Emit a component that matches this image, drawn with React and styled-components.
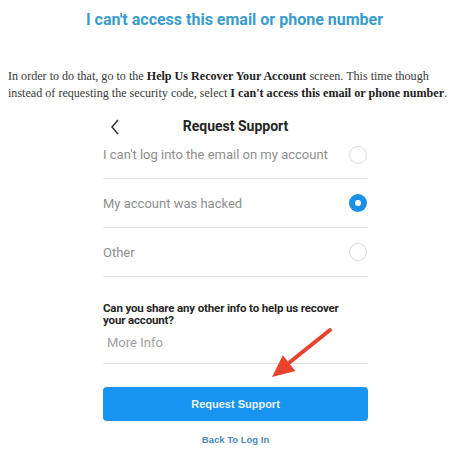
import styled, { createGlobalStyle } from 'styled-components';

const GlobalStyle = createGlobalStyle`
    body {
        margin: 0;
        background: #fff;
    }
`;

const Page = styled.div`
    width: 463px;
    height: 463px;
    overflow: hidden;
    background: #fff;
`;

const Heading = styled.h2`
    margin: 0;
    padding: 10px 0 0 6px;
    text-align: center;
    font-family: Roboto, "Liberation Sans", sans-serif;
    font-weight: 700;
    font-size: 16px;
    line-height: 20px;
    color: #3a9ccb;
`;

const Intro = styled.p`
    margin: 38px 0 0 8px;
    font-family: "Liberation Serif", serif;
    font-size: 12.1px;
    line-height: 17px;
    color: #3a3a3a;
    white-space: nowrap;

    b {
        font-weight: 700;
        color: #222;
    }
`;

const Phone = styled.div`
    position: relative;
    width: 265px;
    margin: 10px 0 0 103px;
    font-family: Roboto, "Liberation Sans", Arial, sans-serif;
`;

const TopBar = styled.div`
    display: flex;
    align-items: center;
    justify-content: center;
    position: relative;
    height: 28px;
`;

const Back = styled.span`
    position: absolute;
    left: 7px;
    top: 7px;
    display: flex;
`;

const Title = styled.div`
    font-weight: 700;
    font-size: 14px;
    color: #262626;
`;

const Option = styled.div`
    display: flex;
    align-items: center;
    justify-content: space-between;
    height: ${p => p.$first ? 29 : 48}px;
    padding-bottom: ${p => p.$first ? 9 : 0}px;
    border-bottom: 1px solid #e4e4e4;
    font-size: 13px;
    color: #8e8e8e;
`;

const Radio = styled.span`
    width: 18px;
    height: 18px;
    margin-right: 1px;
    box-sizing: border-box;
    border-radius: 50%;
    border: ${p => p.$on ? 'none' : '1.5px solid #dcdcdc'};
    background: ${p => p.$on ? '#1a8fe8' : 'transparent'};
    display: flex;
    align-items: center;
    justify-content: center;

    &::after {
        content: '';
        display: ${p => p.$on ? 'block' : 'none'};
        width: 6px;
        height: 6px;
        border-radius: 50%;
        background: #fff;
    }
`;

const Question = styled.div`
    max-width: 248px;
    margin-top: 25px;
    font-weight: 700;
    font-size: 11.5px;
    letter-spacing: -0.15px;
    line-height: 12px;
    color: #262626;
`;

const InfoField = styled.div`
    height: 33px;
    padding: 0 0 4px 4px;
    display: flex;
    align-items: center;
    border-bottom: 1px solid #e4e4e4;
    font-size: 13px;
    color: #a0a0a0;
`;

const SubmitButton = styled.button`
    display: block;
    width: 100%;
    height: 34px;
    margin-top: 23px;
    border: none;
    border-radius: 4px;
    background: #1793f0;
    color: #eaf4fd;
    font-family: "Liberation Sans", Arial, sans-serif;
    font-weight: 700;
    font-size: 11px;
`;

const BackLink = styled.div`
    margin-top: 13px;
    text-align: center;
    font-family: "Liberation Sans", Arial, sans-serif;
    font-weight: 700;
    font-size: 9.5px;
    color: #4a8bbd;
`;

const Arrow = styled.svg`
    position: absolute;
    left: 162px;
    top: 210px;
`;

const ChevronLeft = () => (
    <svg width="10" height="16" viewBox="0 0 10 16">
        <path d="M8 1 L2 8 L8 15" fill="none" stroke="#333" strokeWidth="1.5" />
    </svg>
);

function App() {
    return <Page>
        <GlobalStyle />
        <Heading>I can't access this email or phone number</Heading>
        <Intro>
            In order to do that, go to the <b>Help Us Recover Your Account</b> screen. This time though<br />
            instead of requesting the security code, select <b>I can't access this email or phone number</b>.
        </Intro>
        <Phone>
            <TopBar>
                <Back><ChevronLeft /></Back>
                <Title>Request Support</Title>
            </TopBar>
            <Option $first>I can't log into the email on my account<Radio /></Option>
            <Option>My account was hacked<Radio $on /></Option>
            <Option>Other<Radio /></Option>
            <Question>Can you share any other info to help us recover your account?</Question>
            <InfoField>More Info</InfoField>
            <SubmitButton>Request Support</SubmitButton>
            <BackLink>Back To Log In</BackLink>
            <Arrow width="70" height="60" viewBox="0 0 70 60">
                <path d="M65 8 L25 40" stroke="#e8432c" strokeWidth="4" strokeLinecap="round" />
                <path d="M7 55 L17.8 33.3 L30.4 48.9 Z" fill="#e8432c" />
            </Arrow>
        </Phone>
    </Page>;
}

export default App;
